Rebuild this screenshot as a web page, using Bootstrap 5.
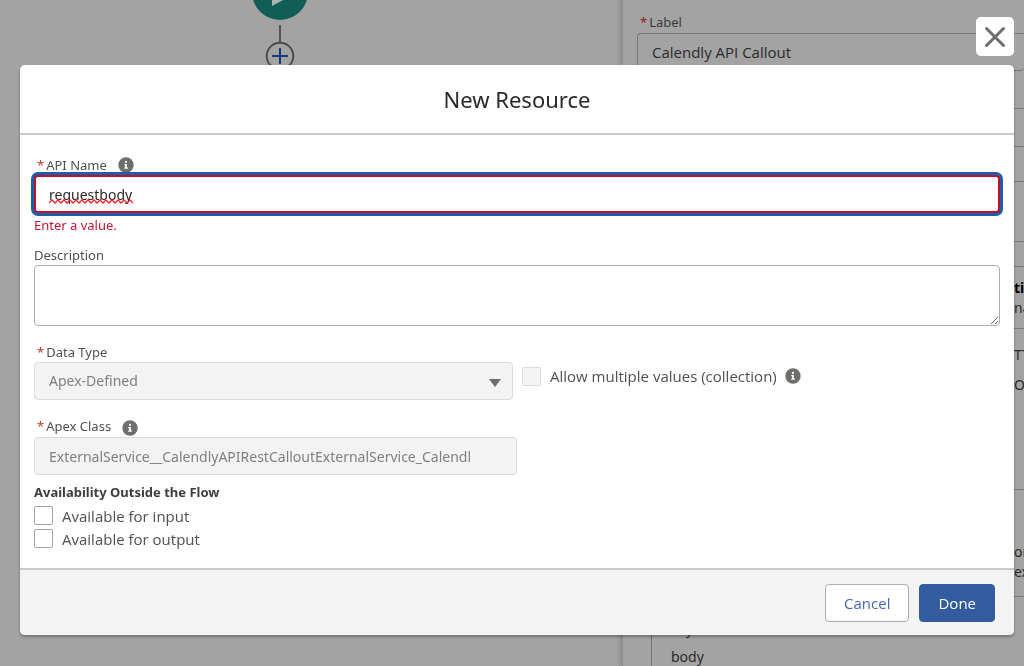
<!DOCTYPE html>
<html lang="en">
<head>
<meta charset="utf-8">
<meta name="viewport" content="width=device-width, initial-scale=1">
<title>New Resource</title>
<link href="https://cdn.jsdelivr.net/npm/bootstrap@5.3.0/dist/css/bootstrap.min.css" rel="stylesheet">
<style>
body { font-family: "Noto Sans", "Open Sans", sans-serif; font-size: 14px; line-height: 20px; color: #3e3e3c; background: #a3a3a3; }
.backdrop-page { height: 100vh; color: #2a2a2a; }
.flow-canvas { padding-right: 61px; }
.side-panel { width: 403px; border-left: 2px solid #8f8f8f; box-shadow: -2px 0 3px rgba(0,0,0,.12); padding: 12px 0 0 14px; }
.side-panel .field-label { color: #3b3b3b; padding-left: 3px; font-size: 13px; }
.side-panel .field-input { background: transparent; border: 1px solid #777; border-radius: 4px; height: 38px; padding: 0 14px; color: #2a2a2a; margin-top: 1px; width: 100%; border-right: 0; border-top-right-radius: 0; font-family: "Open Sans", "Noto Sans", sans-serif; font-size: 15px; }
.rule-row { border-bottom: 1px solid #7c7c7c; }
.edge-text { width: 10px; white-space: nowrap; margin-left: auto; }
.req { color: #c23934; margin-right: 2px; }
.side-panel .req { color: #8b1a20; }
.overlay { position: fixed; inset: 0; padding: 65px 10px 0 20px; z-index: 10; }
.dialog-box { background: #fff; border-radius: 5px; box-shadow: 0 2px 3px rgba(0,0,0,.3); position: relative; }
.close-btn { position: absolute; right: 0; top: -48px; width: 38px; height: 39px; background: #fff; border: 0; border-radius: 5px; padding: 0; }
.dialog-head { height: 70px; border-bottom: 2px solid #c9c9c9; }
.dialog-head h1 { font-size: 22px; line-height: 28px; font-weight: 400; color: #2b2826; }
.dialog-main { padding: 19px 14px 18px; }
.lbl, .err { font-size: 13px; line-height: 20px; color: #51504e; white-space: nowrap; }
.lbl.needed { padding-left: 3px; }
.label-line { height: 21px; }
.box-input { display: block; width: 100%; height: 38px; border: 1px solid #adadad; border-radius: 4px; padding: 0 14px; background: #fff; color: #2b2826; font-size: 14px; line-height: 20px; }
.box-input:disabled { background: #f3f3f3; border-color: #dcdbda; color: #82807e; opacity: 1; }
.box-input.bad { border: 2px solid #c2102b; box-shadow: 0 0 0 3px #1b5fac; outline: 0; padding: 0 13px; }
.spell-wrap { position: relative; }
.spell-wrap svg { position: absolute; left: 15px; bottom: 9px; pointer-events: none; }
.err { color: #c01533; padding-top: 2px; }
.desc-group { padding-top: 10px; }
textarea.box-input { height: 61px; resize: vertical; }
.pick-wrap { position: relative; }
.pick-wrap select { appearance: none; }
.pick-wrap svg { position: absolute; right: 12px; top: 17px; pointer-events: none; }
.tick { appearance: none; width: 19px; height: 19px; border: 1px solid #a3a3a3; border-radius: 2px; background: #fff; margin: 0; flex: none; }
.tick:disabled { background: #f3f3f3; border-color: #dcdbda; }
.tick-label { font-family: "Open Sans", "Noto Sans", sans-serif; font-size: 15px; line-height: 20px; color: #51504e; white-space: nowrap; padding-left: 9px; }
.tick-line { height: 23px; }
.multi-group { padding: 10px 0 0 5px; }
.section-title { font-size: 13px; line-height: 20px; font-weight: 700; margin: 0; padding: 7px 0 2px; }
.dialog-foot { background: #f3f3f3; border-top: 2px solid #c9c9c9; border-radius: 0 0 5px 5px; padding: 14px 19px 13px; gap: 10px; }
.act { height: 38px; font-family: "Open Sans", "Noto Sans", sans-serif; font-size: 15px; line-height: 20px; border-radius: 4px; padding: 0 18px; border: 1px solid #adadad; background: #fff; color: #4568ae; }
.act.main-act { background: #325ba0; border-color: #325ba0; color: #fff; }
.info-icon { margin-left: 11px; }
</style>
</head>
<body class="overflow-hidden">
<svg class="d-none" aria-hidden="true"><symbol id="info" viewBox="0 0 16 16"><circle cx="8" cy="8" r="7.700" fill="#706e6b"/><circle cx="8" cy="4.900" r="1.100" fill="#fff"/><path d="M6.300 7h2.600v3.600h.9v1.200H6.200v-1.200h.9V8.200h-.8z" fill="#fff"/></symbol></svg>

<div class="backdrop-page d-flex overflow-hidden" aria-hidden="true">
  <div class="flow-canvas flex-grow-1 d-flex justify-content-center">
    <svg width="60" height="70" viewBox="0 0 60 70" class="d-block"><circle cx="30" cy="-8" r="28" fill="#115e59"/><path d="M22-6v12l12-6.500V-6z" fill="#a8b4b3"/><path d="M30 25v17" stroke="#555" stroke-width="2"/><circle cx="30" cy="56" r="13.300" fill="none" stroke="#4d4d4d" stroke-width="2"/><path d="M22 56h16M30 48v16" stroke="#123f70" stroke-width="2"/></svg>
  </div>
  <div class="side-panel flex-shrink-0">
    <label class="field-label d-block" for="el-label"><span class="req">*</span>Label</label>
    <input id="el-label" class="field-input" value="Calendly API Callout" tabindex="-1">
    <div class="rule-row" style="height:38px"></div>
    <div class="rule-row" style="height:38px"></div>
    <div class="rule-row" style="height:35px"></div>
    <div class="rule-row" style="height:60px"></div>
    <div class="rule-row" style="height:25px"></div>
    <div class="rule-row" style="height:62px; padding-top:11px"><div class="edge-text fw-bold text-black">ti</div><div class="edge-text">na</div></div>
    <div class="rule-row" style="height:161px; padding-top:16px"><div class="edge-text">TT</div><div class="edge-text" style="padding-top:10px">OS</div></div>
    <div class="rule-row" style="height:107px; padding-top:52px"><div class="edge-text">or</div><div class="edge-text">ex</div></div>
    <div class="border-start border-secondary h-100" style="margin-left:14px; padding:22px 0 0 19px"><div>key</div><div style="padding-top:8px">body</div></div>
  </div>
</div>

<div class="overlay">
  <div class="dialog-box" role="dialog" aria-labelledby="dlg-title">
    <button class="close-btn d-flex align-items-center justify-content-center" type="button" aria-label="Close"><svg width="22" height="22" viewBox="0 0 22 22"><path d="M2.500 2.500l17 17M19.500 2.500l-17 17" stroke="#706e6b" stroke-width="3" stroke-linecap="round"/></svg></button>
    <header class="dialog-head d-flex align-items-center justify-content-center"><h1 id="dlg-title" class="m-0">New Resource</h1></header>
    <form class="dialog-main">
      <div class="label-line d-flex align-items-center"><label class="lbl needed" for="api"><span class="req">*</span>API Name</label><svg class="info-icon" width="16" height="16"><use href="#info"/></svg></div>
      <div class="spell-wrap"><input id="api" class="box-input bad" value="requestbody" spellcheck="false"><svg width="86" height="5" viewBox="0 0 86 5"><path d="M0 4l3-3 3 3 3-3 3 3 3-3 3 3 3-3 3 3 3-3 3 3 3-3 3 3 3-3 3 3 3-3 3 3 3-3 3 3 3-3 3 3 3-3 3 3 3-3 3 3 3-3 3 3 3-3 3 3" fill="none" stroke="#f5222d" stroke-width="1.300"/></svg></div>
      <div class="err">Enter a value.</div>
      <div class="desc-group">
        <label class="lbl d-block" for="desc">Description</label>
        <textarea id="desc" class="box-input"></textarea>
      </div>
      <div class="row g-0 mt-3">
        <div class="col-6 pe-1">
          <label class="lbl needed d-block" for="dtype"><span class="req">*</span>Data Type</label>
          <div class="pick-wrap"><select id="dtype" class="box-input" disabled><option>Apex-Defined</option></select><svg width="12" height="8" viewBox="0 0 12 8"><path d="M0 0h12L6 8z" fill="#706e6b"/></svg></div>
        </div>
        <div class="col-6 d-flex align-items-center multi-group"><input id="multi" class="tick" type="checkbox" disabled><label class="tick-label" for="multi">Allow multiple values (collection)</label><svg class="ms-2" width="16" height="16"><use href="#info"/></svg></div>
      </div>
      <div class="row g-0 mt-3">
        <div class="col-6">
          <div class="label-line d-flex align-items-start"><label class="lbl needed" for="cls"><span class="req">*</span>Apex Class</label><svg class="mt-1 info-icon" width="16" height="16"><use href="#info"/></svg></div>
          <input id="cls" class="box-input" disabled value="ExternalService__CalendlyAPIRestCalloutExternalService_Calendl">
        </div>
      </div>
      <h2 class="section-title">Availability Outside the Flow</h2>
      <div class="tick-line d-flex align-items-center"><input id="inp" class="tick" type="checkbox"><label class="tick-label" for="inp">Available for input</label></div>
      <div class="tick-line d-flex align-items-center"><input id="outp" class="tick" type="checkbox"><label class="tick-label" for="outp">Available for output</label></div>
    </form>
    <footer class="dialog-foot d-flex justify-content-end"><button class="act" type="button">Cancel</button><button class="act main-act" type="button">Done</button></footer>
  </div>
</div>
<script src="https://cdn.jsdelivr.net/npm/bootstrap@5.3.0/dist/js/bootstrap.bundle.min.js"></script>
</body>
</html>
